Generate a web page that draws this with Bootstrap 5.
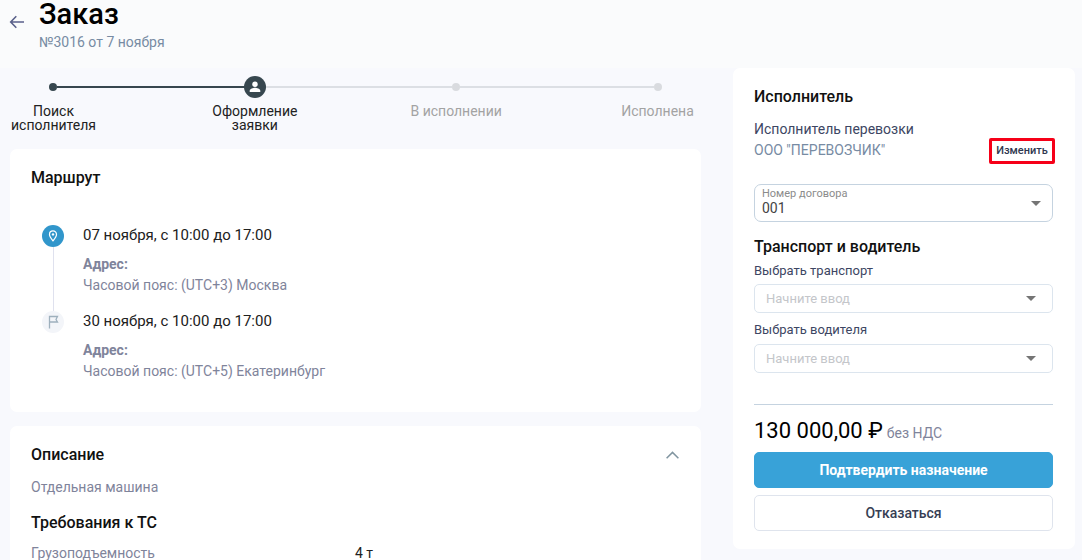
<!DOCTYPE html>
<html lang="ru">
<head>
<meta charset="utf-8">
<meta name="viewport" content="width=device-width, initial-scale=1">
<title>Заказ №3016</title>
<link href="https://cdn.jsdelivr.net/npm/bootstrap@5.3.0/dist/css/bootstrap.min.css" rel="stylesheet">
<style>
  body { background: #f8f9fd; color: #212121; font-family: Roboto, "Liberation Sans", sans-serif; font-size: 14px; line-height: 20px; }
  h1, h2, p, ol { margin: 0; }
  .page-head { background: #fafbfc; height: 68px; padding-left: 9px; gap: 13px; }
  .page-head h1 { font-size: 29px; line-height: 28px; font-weight: 500; color: #000; }
  .back-link { padding-top: 13px; line-height: 1; }
  .slate { color: #778ba3; }
  .muted { color: #7f849b; }
  .navy { color: #3d4663; }
  .page-main { padding: 0 7px 0 10px; gap: 32px; }
  .side-col { width: 342px; }
  .panel { background: #fff; border-radius: 7px; padding: 17px 22px 18px 21px; }
  .section-title { font-size: 16px; line-height: 24px; font-weight: 500; color: #111; }

  .track { margin: 7px 39px 0; height: 24px; }
  .dot { width: 8px; height: 8px; border-radius: 50%; background: #d9dbdf; }
  .rail { height: 2px; background: #dcdfe4; }
  .dot.done, .rail.done { background: #37474f; }
  .current { width: 22px; margin: 0 -7px; z-index: 1; }
  .step-names { margin: 5px -7px 0; }
  .step-names li { width: 101px; line-height: 14px; text-align: center; color: #222; }
  .step-names .later { color: #a3a3a3; }

  .stop-icon { width: 22px; }
  .stop-line { width: 1px; background: #dfe1ee; }
  .route { padding: 31px 0 0 11px; }
  .stop { gap: 19px; }
  .stop-date { font-size: 15px; }
  .stop-address { margin-top: 9px; line-height: 21px; }
  .stop-body { padding: 4px 0 15px; }
  .route-panel { margin-top: 17px; padding-bottom: 30px; }
  .info-panel { margin-top: 14px; }
  .cargo { margin-top: 10px; }
  .needs { margin-top: 14px; }

  .fold-btn { border: 0; background: none; padding: 0 0 0 8px; line-height: 1; }
  .spec-table { table-layout: fixed; }
  .spec-table td { padding: 0; }

  .contractor { margin-top: 10px; line-height: 21px; }
  .change-btn { border: 3px solid #f60018; border-radius: 2px; background: #fff; color: #2f3850; font-size: 11px; line-height: 20px; font-weight: 500; padding: 0; width: 66px; margin: 0 -2px -3px 0; }
  .pick { width: 100%; appearance: none; background: #fff no-repeat; border: 1px solid #dce5ee; border-radius: 5px; font-size: 13px; line-height: 19px; color: #c4c6ca; padding: 4px 11px; height: 29px;
    background-image: url("data:image/svg+xml,%3Csvg xmlns='http://www.w3.org/2000/svg' width='10' height='5'%3E%3Cpath d='M0 0h10L5 5z' fill='%23757575'/%3E%3C/svg%3E"); background-position: right 16px center; }
  .pick-contract { border-color: #c5d3e0; border-radius: 7px; height: 38px; font-size: 14px; color: #444; padding: 11px 7px 0; background-position: right 11px center; }
  .contract { margin: 23px 0 13px; }
  .float-label { position: absolute; left: 8px; top: 4px; font-size: 11px; line-height: 12px; color: #8b8b8b; }
  .small-label { font-size: 13px; line-height: 18px; margin: 3px 0 4px; }
  .pick + .small-label { margin: 8px 0 5px; }
  .total { border-top: 1px solid #c5d3e0; margin-top: 31px; padding-top: 12px; gap: 4px; }
  .total strong { font-size: 22px; line-height: 28px; font-weight: 400; color: #000; }
  .action { height: 36px; border-radius: 5px; font-size: 14px; line-height: 20px; padding: 0; margin-top: 7px; }
  .action-main { background: #38a2d8; border-color: #38a2d8; color: #fff; font-weight: 700; }
  .action-plain { background: #fff; border-color: #dfe4ed; color: #363e54; font-weight: 500; }
</style>
<script src="https://cdn.jsdelivr.net/npm/bootstrap@5.3.0/dist/js/bootstrap.bundle.min.js"></script>
</head>
<body>
<header class="page-head d-flex align-items-start">
  <a class="back-link" href="#" aria-label="Назад">
    <svg class="d-block" width="17" height="17" viewBox="0 0 17 17" fill="none" stroke="#59608a" stroke-width="1.6"><path d="M15 9H2M7.300 3.300 1.700 9l5.600 5.700"/></svg>
  </a>
  <div>
    <h1>Заказ</h1>
    <p class="slate mt-1">№3016 от 7 ноября</p>
  </div>
</header>

<main class="page-main d-flex align-items-start">
  <div class="flex-fill">
    <div class="track d-flex align-items-center">
      <span class="dot done"></span><span class="rail done flex-fill"></span>
      <svg class="current flex-shrink-0" height="22" viewBox="0 0 22 22"><circle cx="11" cy="11" r="11" fill="#37474f"/><circle cx="11" cy="8.300" r="2.700" fill="#fff"/><path d="M5.700 16v-1.300c0-1.900 3.500-2.900 5.300-2.900s5.300 1 5.300 2.900V16z" fill="#fff"/></svg>
      <span class="rail flex-fill"></span><span class="dot"></span>
      <span class="rail flex-fill"></span><span class="dot"></span>
    </div>
    <ol class="step-names list-unstyled d-flex justify-content-between">
      <li>Поиск исполнителя</li>
      <li>Оформление заявки</li>
      <li class="later">В исполнении</li>
      <li class="later">Исполнена</li>
    </ol>

    <section class="panel route-panel">
      <h2 class="section-title">Маршрут</h2>
      <div class="route">
        <div class="stop d-flex">
          <div class="stop-icon d-flex flex-column align-items-center">
            <svg class="d-block mt-1 flex-shrink-0" width="22" height="22" viewBox="0 0 22 22" fill="none"><circle cx="11" cy="11" r="11" fill="#3196cb"/><path d="M11 15.800C9 13.300 7.500 11.600 7.500 9.400a3.500 3.500 0 0 1 7 0c0 2.200-1.500 3.900-3.500 6.400z" stroke="#fff" stroke-width="1.200"/><circle cx="11" cy="9.400" r="1.200" fill="#fff"/></svg>
            <span class="stop-line flex-fill"></span>
          </div>
          <div class="stop-body">
            <p class="stop-date">07 ноября, с 10:00 до 17:00</p>
            <div class="stop-address muted"><b>Адрес:</b><br>Часовой пояс: (UTC+3) Москва</div>
          </div>
        </div>
        <div class="stop d-flex">
          <div class="stop-icon">
            <svg class="d-block" width="22" height="22" viewBox="0 0 22 22" fill="none"><circle cx="11" cy="11" r="11" fill="#f3f5f9"/><path d="M7.500 17.500v-12h8l-1.500 3 1.500 2.500h-8" stroke="#9eb0bd" stroke-width="1.300"/></svg>
          </div>
          <div>
            <p class="stop-date">30 ноября, с 10:00 до 17:00</p>
            <div class="stop-address muted"><b>Адрес:</b><br>Часовой пояс: (UTC+5) Екатеринбург</div>
          </div>
        </div>
      </div>
    </section>

    <section class="panel info-panel">
      <div class="d-flex justify-content-between align-items-center">
        <h2 class="section-title">Описание</h2>
        <button class="fold-btn" type="button" aria-label="Свернуть описание">
          <svg class="d-block" width="13" height="8" viewBox="0 0 13 8" fill="none" stroke="#8195a0" stroke-width="1.500"><path d="M.6 7.300l5.900-5.900 5.900 5.900"/></svg>
        </button>
      </div>
      <p class="cargo muted">Отдельная машина</p>
      <h2 class="section-title needs">Требования к ТС</h2>
      <table class="spec-table w-100 mt-2">
        <tr><td class="muted">Грузоподъемность</td><td>4 т</td></tr>
      </table>
    </section>
  </div>

  <aside class="side-col panel flex-shrink-0">
    <h2 class="section-title">Исполнитель</h2>
    <div class="contractor d-flex justify-content-between align-items-end">
      <div>
        <p class="navy">Исполнитель перевозки</p>
        <p class="slate">ООО "ПЕРЕВОЗЧИК"</p>
      </div>
      <button class="change-btn" type="button">Изменить</button>
    </div>
    <div class="contract position-relative">
      <label class="float-label" for="contract">Номер договора</label>
      <select class="pick pick-contract d-block" id="contract"><option>001</option></select>
    </div>
    <h2 class="section-title">Транспорт и водитель</h2>
    <label class="small-label navy d-block" for="vehicle">Выбрать транспорт</label>
    <select class="pick d-block" id="vehicle"><option>Начните ввод</option></select>
    <label class="small-label navy d-block" for="driver">Выбрать водителя</label>
    <select class="pick d-block" id="driver"><option>Начните ввод</option></select>
    <div class="total d-flex align-items-baseline">
      <strong>130 000,00 ₽</strong><span class="muted">без НДС</span>
    </div>
    <button class="btn action action-main w-100" type="button">Подтвердить назначение</button>
    <button class="btn action action-plain w-100" type="button">Отказаться</button>
  </aside>
</main>
</body>
</html>
